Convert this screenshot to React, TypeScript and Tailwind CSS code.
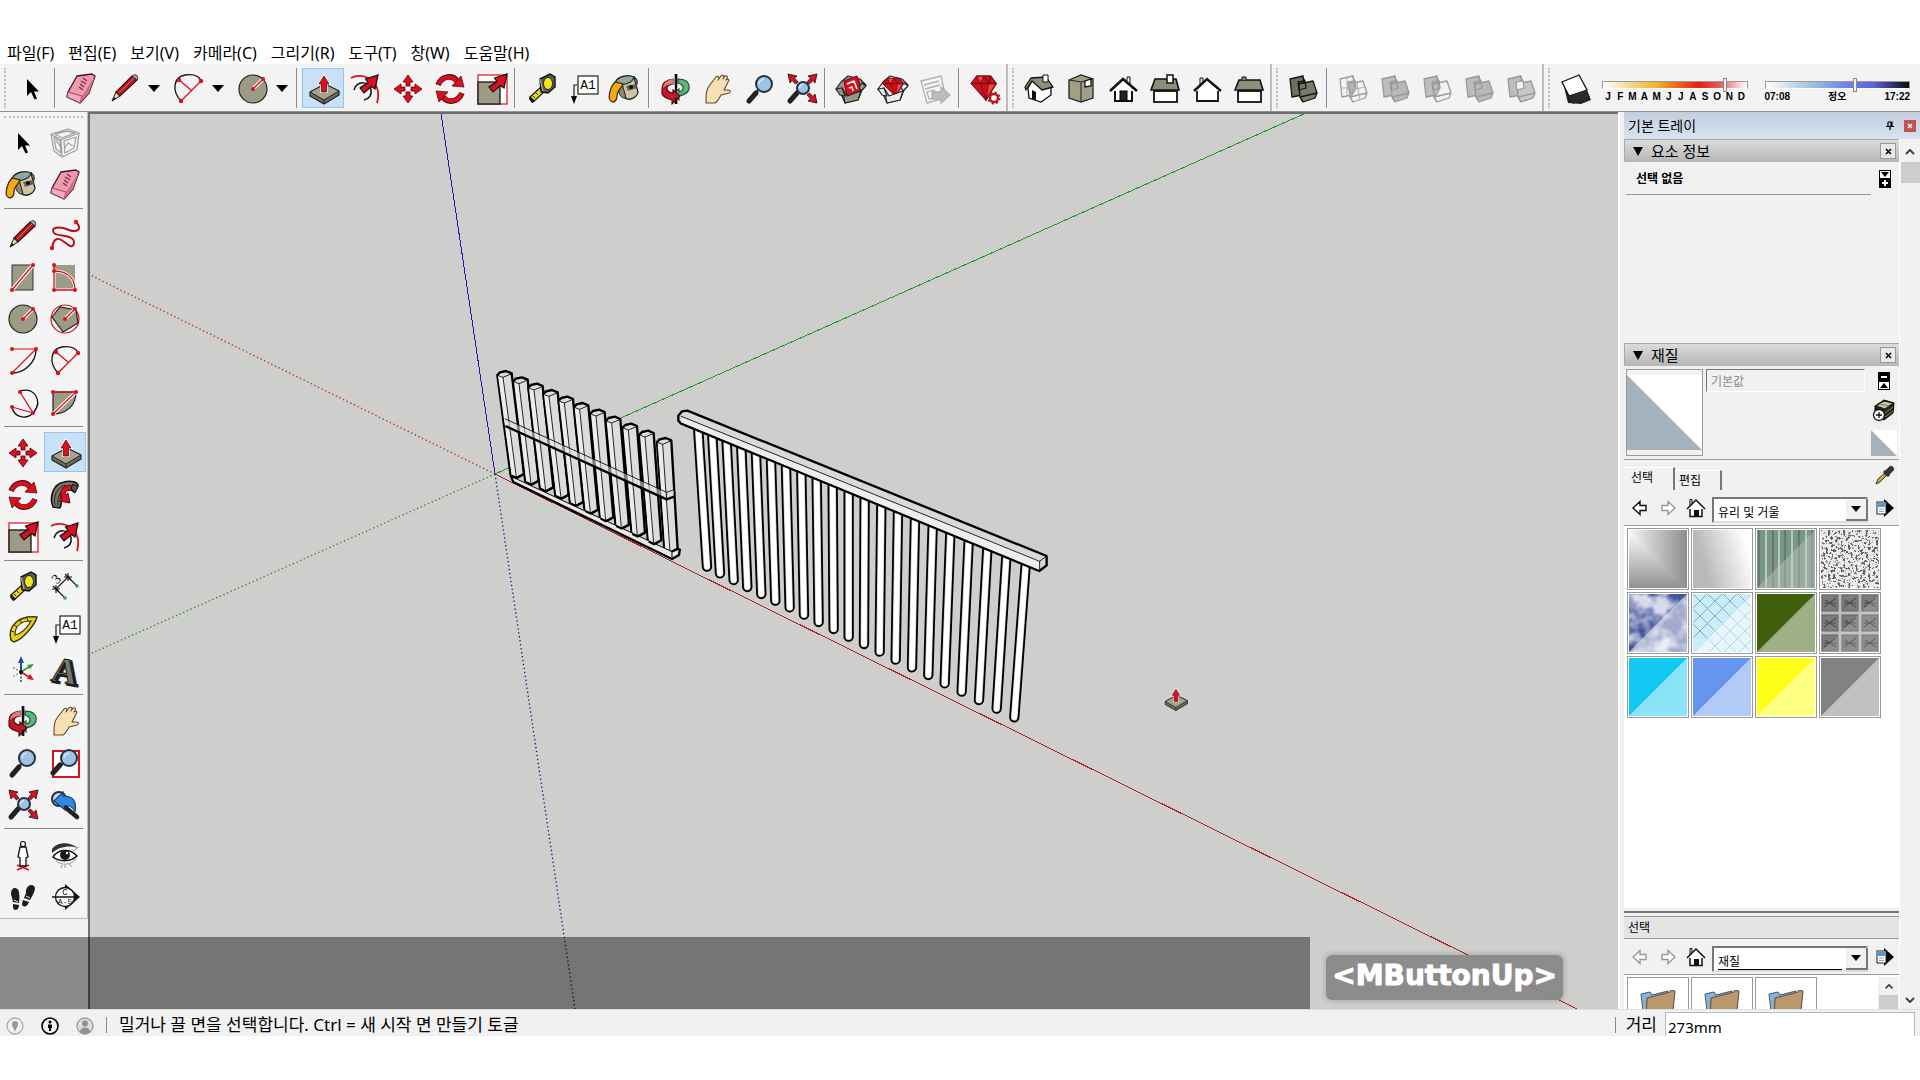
import React from 'react';
import clsx from 'clsx';

const RED = '#d9101f';
const STONE = '#9c9b86';

type IconName = keyof typeof icons;

const Dot = ({ x, y, r = 2 }: { x: number; y: number; r?: number }) => <circle cx={x} cy={y} r={r} fill={RED} />;

const Lens = ({ x = 19, y = 11, r = 8, hx = 3, hy = 29 }) => (
  <>
    <path d={`M${x - r * 0.7} ${y + r * 0.7} L${hx + 6} ${hy - 7}`} stroke="#333" strokeWidth="2" />
    <path d={`M${hx + 7} ${hy - 9} L${hx} ${hy - 1}`} stroke="#222" strokeWidth="5" strokeLinecap="round" />
    <circle cx={x} cy={y} r={r} fill="#9fc3e6" stroke="#26303c" strokeWidth="2" />
    <path d={`M${x - r * 0.6} ${y} A${r * 0.6} ${r * 0.6} 0 0 1 ${x} ${y - r * 0.6}`} stroke="#d8e9f8" strokeWidth="1.5" fill="none" />
  </>
);

const NeArrow = () => (
  <path d="M31 0 L28 14 L24.5 11.5 L17 18 L13 13 L21 7.5 L18.5 4 Z" fill={RED} stroke="#111" strokeWidth="1.2" />
);

const CornerArrow = ({ t }: { t: string }) => (
  <path transform={t} d="M1 1 L10 3 L7.5 5 L11 9 L8.5 11 L5 7.5 L3 10 Z" fill={RED} stroke="#111" strokeWidth="0.8" />
);

const Solids = ({ a, b, c }: { a: string; b: string; c: string }) => (
  <g strokeLinejoin="round" strokeWidth="1.3">
    <path d="M3 6 L16 3 L18 17 L15 22 L5 24 Z" fill={a} stroke={c} />
    <path d="M12 11 L26 8 L30 20 L28 25 L16 29 L13 24 Z" fill={b} stroke={c} />
    <path d="M13 24 L30 20 M16 29 L13 24 M15 3 L18 8" fill="none" stroke={c} />
    <path d="M11 9 L18 8 L19 15 L12 17 Z" fill="none" stroke={c} />
  </g>
);

const Gem = () => (
  <>
    <path d="M8 3 L23 3 L29 11 L18 29 L2 11 Z" fill="#c9131c" stroke="#5c0509" />
    <path d="M8 3 L12 11 L16 3 L21 11 L23 3 M2 11 H29 M12 11 L18 29 L21 11" fill="none" stroke="#6e060b" />
    <path d="M9 4 L15 4 L12 10 Z M21 12 L27 12 L19 24 Z" fill="#ef4a4d" />
  </>
);

const OpenBox = ({ fill, children }: { fill: string; children: React.ReactNode }) => (
  <g strokeLinejoin="round">
    <path d="M6 9 L13 3 L25 6 L31 12 L27 17 L23 27 L10 30 L6 21 L1 16 Z" fill={fill} stroke="#222" strokeWidth="1.2" />
    {children}
    <path d="M7 15 L12 23 L26 18 L23 27 L10 30 Z" fill={fill} stroke="#222" strokeWidth="1.2" />
    <path d="M7 15 L1 16 L5 22 L10 23 Z M26 18 L31 13 L27 10 L24 14 Z" fill={fill} stroke="#222" strokeWidth="1.2" />
  </g>
);

const icons = {
  select: <path d="M12 6 V23 L16 19 L19.5 26.5 L22 25.5 L19 18.5 H24 Z" fill="#000" />,
  component: (
    <g fill="none" stroke="#a0a0a0" strokeWidth="1.3" strokeLinejoin="round">
      <path d="M2 7 L19 2 L30 6 L28 23 L13 30 L5 24 Z M2 7 L12 13 L13 30 M12 13 L30 6" />
      <path d="M5 10 L11 14 L12 26 L7 22 Z M15 14 L27 10 L25 21 L16 26 Z" />
      <path d="M6 7 L18 4 L26 6 L13 11 Z M15 22 L19 16 L24 19 M7 13 L11 19" />
    </g>
  ),
  paint: (
    <>
      <path d="M17 5 C26 1 30 7 27 13" fill="none" stroke="#222" strokeWidth="1.3" />
      <path d="M10 8 L25 4 L29 19 C28 25 20 28 16 25 Z" fill="#cfc3a2" stroke="#222" strokeWidth="1.3" />
      <path d="M17 13 L27 11 L28 15 L19 18 Z" fill="#5f6358" />
      <path d="M6 10 C8 3 20 1 25 4 C24 10 12 14 6 10 Z" fill="#8fa7a5" stroke="#222" strokeWidth="1.3" />
      <path d="M13 10 L17 25 C11 26 9 19 9 13 Z" fill="#8c8a75" stroke="#222" />
      <path d="M6 9 C1 14 -1 24 1 27 C4 31 8 28 8 23 C8 17 13 15 14 11 Z" fill="#f3a81c" stroke="#3b2a05" strokeWidth="1.2" />
      <circle cx="22" cy="14" r="2" fill="#111" />
    </>
  ),
  eraser: (
    <>
      <path d="M12 3 L27 1 L30 3 L24 20 L15 30 L2 24 L3 19 Z" fill="#f39ab0" stroke="#3c1520" strokeWidth="1.3" strokeLinejoin="round" />
      <path d="M3 19 L17 23 L15 30 L2 24 Z" fill="#f7a9bc" stroke="#7c3a4a" strokeWidth="0.8" />
      <path d="M17 23 L30 3 L24 20 L15 30 Z" fill="#cf6f88" />
      <path d="M18 5 L22 8 M16 8 L21 11 M15 11 L19 14 M14 14 L18 17" stroke="#7a3044" strokeWidth="1.4" />
    </>
  ),
  pencil: (
    <>
      <path d="M4 28 L8 19 L12 23 Z" fill="#e8d3a1" stroke="#222" />
      <path d="M4 28 L6 24 L8 26 Z" fill="#111" />
      <path d="M8 19 L24 3 L29 7 L12 23 Z" fill="#b41a20" stroke="#3a0c0e" strokeWidth="1.2" />
      <path d="M11 20 L26 5" stroke="#e4686b" />
      <path d="M24 3 C28 0 31 3 29 7 Z" fill="#b7a4a4" stroke="#333" />
    </>
  ),
  freehand: (
    <>
      <path d="M27 3 C34 10 28 14 20 11 C10 7 1 8 5 14 C8 18 26 15 25 24 C23 34 14 18 8 20 C3 22 4 27 3 29" fill="none" stroke="#b3101c" strokeWidth="2" />
      <Dot x={27} y={3} r={2.2} />
      <Dot x={3} y={29} r={2.2} />
    </>
  ),
  rect: (
    <>
      <rect x="6" y="4" width="21" height="25" fill={STONE} stroke="#333" />
      <path d="M6 29 L27 4" stroke="#fff" strokeWidth="3.5" />
      <path d="M6 29 L27 4" stroke={RED} strokeWidth="1.3" />
      <Dot x={27} y={4} />
      <Dot x={6} y={29} />
    </>
  ),
  rotRect: (
    <>
      <path d="M5 4 H26 V29 H5 Z" fill={STONE} />
      <path d="M5 10 C18 10 26 17 26 29 H5 Z" fill={STONE} stroke="#fff" strokeWidth="3" />
      <path d="M5 4 V29 H26 C26 16 17 10 5 10" fill="none" stroke={RED} strokeWidth="1.3" />
      <Dot x={5} y={4} /><Dot x={5} y={10} /><Dot x={5} y={29} /><Dot x={26} y={29} />
    </>
  ),
  circle: (
    <>
      <circle cx="17" cy="16" r="14" fill={STONE} stroke="#222" strokeWidth="1.2" />
      <path d="M17 16 L27 6" stroke="#fff" strokeWidth="3.5" />
      <path d="M17 16 L27 6" stroke={RED} strokeWidth="1.5" />
      <Dot x={17} y={16} /><Dot x={27} y={6} />
    </>
  ),
  polygon: (
    <>
      <circle cx="16" cy="16" r="14" fill="none" stroke={RED} strokeWidth="1.2" />
      <path d="M3 14 L11 4 L27 7 L29 20 L14 29 Z" fill={STONE} stroke="#222" strokeWidth="1.2" />
      <path d="M16 16 L26 6" stroke="#fff" strokeWidth="3.5" />
      <path d="M16 16 L26 6" stroke={RED} strokeWidth="1.5" />
      <Dot x={16} y={16} /><Dot x={26} y={6} />
    </>
  ),
  arc: (
    <>
      <path d="M30 4 C30 18 18 28 6 28" fill="none" stroke="#111" strokeWidth="1.3" />
      <path d="M6 4 H30 L6 28" fill="none" stroke={RED} strokeWidth="1.2" />
      <Dot x={6} y={4} /><Dot x={30} y={4} /><Dot x={6} y={28} />
    </>
  ),
  arc2: (
    <>
      <path d="M9 28 C-1 17 2 4 13 2 C21 1 27 3 29 8" fill="none" stroke="#111" strokeWidth="1.3" />
      <path d="M9 28 L29 8 M7 7 L19 17" fill="none" stroke={RED} strokeWidth="1.3" />
      <Dot x={9} y={28} r={2.2} /><Dot x={29} y={8} r={2.2} /><Dot x={7} y={7} r={2.2} />
    </>
  ),
  arc3: (
    <>
      <path d="M14 4 C28 0 37 13 28 25 C20 34 8 30 6 20" fill="none" stroke="#111" strokeWidth="1.3" />
      <path d="M14 5 L27 26 L6 20" fill="none" stroke={RED} strokeWidth="1.3" />
      <Dot x={14} y={5} /><Dot x={27} y={26} /><Dot x={6} y={20} />
    </>
  ),
  pie: (
    <>
      <path d="M4 5 H27 C27 18 18 27 4 27 Z" fill={STONE} stroke="#222" strokeWidth="1.2" />
      <path d="M4 27 L27 5" stroke="#fff" strokeWidth="3.5" />
      <path d="M4 27 L27 5 H4" fill="none" stroke={RED} strokeWidth="1.3" />
      <Dot x={4} y={5} /><Dot x={27} y={5} /><Dot x={4} y={27} />
    </>
  ),
  move: (
    <g fill={RED} stroke="#6e0710" strokeWidth="0.9">
      {[0, 90, 180, 270].map((a) => (
        <path key={a} transform={`rotate(${a} 17 16)`} d="M17 2 L22 9 H19 V13 H15 V9 H12 Z" />
      ))}
    </g>
  ),
  pushpull: (
    <>
      <path d="M3 19 L18 11 L32 18 V22 L17 31 L3 23 Z" fill="#6d6c5c" stroke="#222" strokeWidth="1.2" strokeLinejoin="round" />
      <path d="M3 19 L18 11 L32 18 L17 27 Z" fill="#a4a38f" stroke="#222" strokeWidth="1" strokeLinejoin="round" />
      <path d="M17 27 V31" stroke="#222" />
      <path d="M17 3 L22 11 H19.500 V19 H14.500 V11 H12 Z" fill={RED} stroke="#fff" strokeWidth="2.2" />
      <path d="M17 3 L22 11 H19.500 V19 H14.500 V11 H12 Z" fill={RED} stroke="#5a0a10" strokeWidth="0.8" />
    </>
  ),
  rotate: (
    <>
      {[0, 180].map((a) => (
        <g key={a} transform={`rotate(${a} 17 16)`}>
          <path d="M5 12 C9 2 20 2 24 8" fill="none" stroke="#5a0a10" strokeWidth="5.600" />
          <path d="M5.500 11.500 C9 3 19 2 24 8.500" fill="none" stroke={RED} strokeWidth="4" />
          <path d="M28 3 L31 14 L19 13 Z" fill={RED} stroke="#5a0a10" strokeWidth="0.8" />
        </g>
      ))}
    </>
  ),
  followme: (
    <>
      <path d="M4 28 C0 18 4 5 15 3 C22 1 29 3 29 7 L25 13 C20 8 13 12 12 18 C12 22 13 25 11 29 Z" fill="#78776a" stroke="#111" strokeWidth="1.6" />
      <path d="M6 26 C4 17 8 8 17 6 M9 27 C8 19 10 12 18 9" fill="none" stroke="#222" />
      <path d="M22 6 C12 7 10 13 13 19 L10 22 L21 24 L19 14 L17 16 C15 13 18 11 23 11 Z" fill={RED} stroke="#5a0a10" />
      <path d="M24 5 L29 8 L26 14 L22 9 Z" fill="#55544a" stroke="#111" />
    </>
  ),
  scale: (
    <>
      <rect x="3" y="2" width="29" height="29" fill="#fff" stroke={RED} strokeWidth="1.2" />
      <rect x="3" y="9" width="22" height="22" fill={STONE} stroke="#222" strokeWidth="1.4" />
      <g transform="translate(1 1)"><NeArrow /></g>
    </>
  ),
  offset: (
    <>
      <path d="M2 5 C14 -2 34 8 28 30" fill="none" stroke={RED} strokeWidth="1.800" />
      <path d="M5 17 C8 7 21 8 22 17 C23 22 20 26 15 27" fill="none" stroke="#111" strokeWidth="1.500" />
      <g transform="translate(-2 2)"><NeArrow /></g>
    </>
  ),
  tape: (
    <>
      <path d="M5 24 L15 15 L19 19 L8 29 Z" fill="#e9d81c" stroke="#222" strokeWidth="1.3" />
      <path d="M8 23 L10 25 M11 20 L13 22" stroke="#222" />
      <path d="M5 23 L10 28 L7 30 L4 26 Z" fill="#111" />
      <path d="M15 6 L25 1 L30 4 V14 L23 20 L16 19 Z" fill="#5c5c52" stroke="#111" strokeWidth="1.4" />
      <ellipse cx="23" cy="10.500" rx="4.500" ry="6" fill="#f2e81e" stroke="#222" />
      <path d="M15 6 L18 18" stroke="#bbb" />
    </>
  ),
  dimension: (
    <>
      <path d="M7 18 L19 6 M7 18 L16 27 M19 6 L28 15" stroke="#222" strokeWidth="1.2" />
      <path d="M3 18 H11 M7 14 V22 M4 15 L10 21 M15 6 H23 M19 2 V10 M16 3 L22 9" stroke="#111" strokeWidth="1.1" />
      <circle cx="16" cy="27" r="1.800" fill="#3aa83f" />
      <circle cx="28" cy="15" r="1.800" fill="#3aa83f" />
      <text x="4" y="12" transform="rotate(-45 8 8)" fill="#111" fontSize="14" fontFamily="Liberation Serif">3</text>
    </>
  ),
  protractor: (
    <>
      <path d="M5 27 C1 13 13 2 31 4 C29 12 16 27 8 29 Z" fill="#e6cf28" stroke="#3a3208" strokeWidth="1.4" />
      <path d="M9 22 C9 13 15 8 25 8 C21 15 15 21 9 22 Z" fill="#f3f3f3" stroke="#3a3208" strokeWidth="1.2" />
      <path d="M5 18 L8 19 M8 12 L11 14 M14 7 L16 10 M21 5 L22 8" stroke="#3a3208" />
    </>
  ),
  text: (
    <>
      <path d="M13 12 H7 V24" fill="none" stroke="#222" strokeWidth="1.2" />
      <path d="M4 23 H10 L7 31 Z" fill="#000" />
      <rect x="11" y="3" width="20" height="18" fill="#fff" stroke="#222" strokeWidth="1.2" />
      <text x="21" y="16" textAnchor="middle" fill="#111" fontSize="13" fontFamily="Liberation Mono">A1</text>
    </>
  ),
  axes: (
    <>
      <path d="M15 17 V6" stroke="#1c4f9c" strokeWidth="2" />
      <path d="M15 1 L18 8 H12 Z" fill="#1c4f9c" />
      <path d="M15 18 V28" stroke="#1c4f9c" strokeWidth="1.500" strokeDasharray="2 1.500" />
      <path d="M15 17 L23 12" stroke="#2e9e38" strokeWidth="1.600" />
      <path d="M28 9 L24 14 L21 10 Z" fill="#2e9e38" />
      <path d="M15 17 L6 22" stroke="#2e9e38" strokeDasharray="2 1.500" />
      <path d="M15 17 L23 22" stroke={RED} strokeWidth="1.600" />
      <path d="M28 25 L21 24 L24 19 Z" fill={RED} />
      <path d="M15 17 L6 12" stroke={RED} strokeDasharray="2 1.500" />
      <circle cx="15" cy="17" r="2" fill="#111" />
    </>
  ),
  text3d: (
    <g fontFamily="Liberation Serif" fontWeight="bold" fontSize="36" transform="rotate(10 16 16)">
      <text x="5" y="29" fill="#222" stroke="#222" strokeWidth="2">A</text>
      <text x="3" y="28" fill="#77766a" stroke="#111" strokeWidth="0.900">A</text>
    </g>
  ),
  orbit: (
    <>
      <path d="M17 1 V31" stroke="#111" strokeWidth="2.400" />
      <path d="M19 6 C28 6 31 11 30 16 C29 20 25 22 20 23 V27 L14 21 L20 16 V19 C25 18 26 12 19 10 Z" fill="#5cb77d" stroke="#1e4a2c" strokeWidth="1.1" />
      <path d="M14 6 C5 7 3 12 3 16 L3 21 C5 25 9 26 13 27 V31 L21 23 L14 17 V20 C6 19 6 12 14 11 Z" fill="#c01a2a" stroke="#4a060d" strokeWidth="1.1" />
      <path d="M14 6 C7 7 4 11 4 15 C7 12 10 11 14 11 Z" fill="#e57b7b" />
      <path d="M17 1 V12 M17 25 V31" stroke="#111" strokeWidth="2.400" />
    </>
  ),
  pan: (
    <path
      d="M5 30 C5 22 5 17 8 13 L15 4 C17 2 19 4 17 7 L20 3 C22 1 24 3 22 6 L24 3 C27 2 27 5 25 7 C27 5 29 7 27 9 L23 17 L27 17 C30 17 30 19 28 20 L20 22 C18 26 16 29 14 30 Z"
      fill="#f8e0b4" stroke="#5b4a2c" strokeWidth="1.1" strokeLinejoin="round"
    />
  ),
  zoom: <Lens x={21} y={11} r={8} hx={6} />,
  zoomWindow: (
    <>
      <rect x="4" y="4" width="26" height="26" fill="#fff" stroke={RED} strokeWidth="2" />
      <Lens x={20} y={11} r={8} hx={4} hy={27} />
    </>
  ),
  extents: (
    <>
      <CornerArrow t="translate(2 0)" />
      <CornerArrow t="translate(33 0) scale(-1 1)" />
      <CornerArrow t="translate(33 31) scale(-1 -1)" />
      <Lens x={18} y={15} r={6} hx={5} />
    </>
  ),
  previous: (
    <>
      <circle cx="10" cy="10" r="7" fill="#c9dcee" stroke="#26303c" strokeWidth="2" />
      <path d="M16 18 L28 28" stroke="#222" strokeWidth="4.500" strokeLinecap="round" />
      <path d="M5 12 L14 3 V7 C24 7 28 12 26 23 C24 17 20 16 15 17 L16 21 Z" fill="#2c8be0" stroke="#113a66" strokeWidth="1.1" />
    </>
  ),
  position: (
    <>
      <path d="M11 26 L23 31 M23 26 L11 31" stroke={RED} strokeWidth="1.500" />
      <circle cx="17" cy="5" r="2.500" fill="#fff" stroke="#111" strokeWidth="1.2" />
      <path d="M14 8 H20 L22 18 L20 19 L20 27 H14 L14 19 L12 18 Z" fill="#fff" stroke="#111" strokeWidth="1.3" />
    </>
  ),
  look: (
    <>
      <path d="M3 10 C8 3 20 2 29 9 C22 6 10 7 3 14 Z" fill="#333" />
      <path d="M4 18 C9 10 21 9 28 17 C22 23 10 23 4 18 Z" fill="#fff" stroke="#111" strokeWidth="1.500" />
      <circle cx="16" cy="16" r="5" fill="#1a1a1a" />
      <circle cx="18" cy="14" r="1.200" fill="#fff" />
      <path d="M7 22 C13 27 22 26 27 20 M12 26 L13 29 M16 26 V29 M24 12 L30 8 M20 25 L23 28" fill="none" stroke="#999" />
    </>
  ),
  walk: (
    <>
      <path d="M5 13 C5 5 12 6 13 11 C14 16 13 19 13 22 L7 21 Z M7 23 L13 24 C13 30 8 30 7 27 Z" fill="#1c1c1c" />
      <path d="M20 12 C19 5 27 1 29 7 C29 11 26 15 24 19 L18 17 Z M17 19 L23 21 C21 27 16 26 16 23 Z" fill="#1c1c1c" />
      <path d="M8 19 L12 21 M20 15 L24 17" stroke="#eee" />
    </>
  ),
  section: (
    <>
      <path d="M16 3 L31 16 L16 29 Z" fill="#111" />
      <circle cx="16" cy="16" r="9.500" fill="#fff" stroke="#111" strokeWidth="1.3" />
      <path d="M3 16 H30" stroke="#111" strokeWidth="1.500" />
      <text x="16" y="14" textAnchor="middle" fill="#111" fontSize="9" fontFamily="Liberation Mono">C</text>
      <text x="16" y="23" textAnchor="middle" fill="#111" fontSize="8" fontFamily="Liberation Mono">A-5</text>
    </>
  ),
  warehouse: (
    <OpenBox fill="#9a9584">
      <path d="M9 8 L22 3 L27 17 L12 23 Z" fill={RED} stroke="#6e0710" />
      <path d="M12 11 L19 8 L22 16 M14 15 L17 14 L18 18" fill="none" stroke="#fff" strokeWidth="1.500" />
    </OpenBox>
  ),
  extWarehouse: (
    <OpenBox fill="#ececec">
      <g transform="translate(4 3) scale(.8 .7)"><Gem /></g>
    </OpenBox>
  ),
  layout: (
    <g stroke="#b0b0b0" strokeWidth="1.3">
      <path d="M2 8 L22 3 L27 25 L8 30 Z" fill="#f6f6f6" />
      <path d="M5 12 L20 8 M6 16 L21 12 M8 19 L15 17 L17 25 L10 26 Z" fill="none" />
      <path d="M13 19 H22 V14 L31 22 L22 30 V26 H13 Z" fill="#bdbdbd" />
    </g>
  ),
  extManager: (
    <>
      <g transform="scale(.95 .95)"><Gem /></g>
      <circle cx="25" cy="25" r="4" fill="#fff" stroke="#b91822" strokeWidth="2.400" />
      <circle cx="25" cy="25" r="5.500" fill="none" stroke="#b91822" strokeWidth="2" strokeDasharray="2.200 2.100" />
    </>
  ),
  viewIso: (
    <>
      <path d="M5 15 L9 8 L19 15 L28 13 V22 L18 29 L6 25 Z" fill="#fff" stroke="#111" strokeWidth="1.300" />
      <path d="M2 14 L8 5 L23 4 L30 14 L19 17 L9 8 L3 17 Z" fill="#8e8d7a" stroke="#111" strokeWidth="1.300" strokeLinejoin="round" />
      <path d="M20 9 V2 H25 V9 Z" fill="#fff" stroke="#111" />
      <path d="M9 17 L13 19 V27 L9 26 Z" fill="#111" />
    </>
  ),
  viewTop: (
    <>
      <path d="M4 7 L16 2 L28 6 V25 L16 29 L4 25 Z" fill="#a19f88" stroke="#222" strokeWidth="1.300" />
      <path d="M16 9 V29 M4 7 L16 9 L28 6" fill="none" stroke="#222" />
      <path d="M20 8 L26 6 V13 L20 14 Z" fill="#fff" stroke="#111" strokeWidth="1.300" />
    </>
  ),
  viewFront: (
    <>
      <path d="M8 15 V28 H25 V15" fill="#fff" stroke="#111" strokeWidth="2" />
      <path d="M3 18 L16 6 L30 18" fill="#fff" stroke="#111" strokeWidth="2.600" />
      <path d="M20 8 V4 H23 V11" fill="none" stroke="#111" />
      <rect x="13" y="18" width="7" height="10" fill="#222" stroke="#000" />
    </>
  ),
  viewRight: (
    <>
      <rect x="5" y="18" width="23" height="11" fill="#fff" stroke="#111" strokeWidth="1.800" />
      <path d="M6 6 H27 L30 17 H2 Z" fill="#8e8d7a" stroke="#111" strokeWidth="1.600" />
      <rect x="18" y="2" width="6" height="8" fill="#fff" stroke="#111" strokeWidth="1.500" />
    </>
  ),
  viewBack: (
    <>
      <path d="M6 15 V28 H27 V15" fill="#fff" stroke="#111" strokeWidth="1.800" />
      <path d="M3 18 L16 6 L30 18" fill="#fff" stroke="#111" strokeWidth="2.400" />
      <path d="M9 12 V5 H12 V9" fill="none" stroke="#111" />
    </>
  ),
  viewLeft: (
    <>
      <rect x="5" y="18" width="23" height="11" fill="#fff" stroke="#111" strokeWidth="1.800" />
      <path d="M6 7 H27 L30 17 H2 Z" fill="#8e8d7a" stroke="#111" strokeWidth="1.600" />
      <path d="M9 7 V4 H13 V7" fill="#8e8d7a" stroke="#111" />
    </>
  ),
  outerShell: <Solids a="#6f6e60" b="#7d7c6c" c="#151512" />,
  intersect: (
    <>
      <Solids a="none" b="none" c="#9c9c9c" />
      <path d="M11 10 L17 9 L18 17 L14 21 Z" fill="#b5b5b5" stroke="#9c9c9c" />
      <path d="M5 15 H16 M10 4 V23 M20 10 L23 27 M14 17 L28 14" stroke="#b0b0b0" />
    </>
  ),
  union: <Solids a="#bdbdbd" b="#b9b9b9" c="#989898" />,
  subtract: <Solids a="#bdbdbd" b="none" c="#989898" />,
  trim: <Solids a="#bdbdbd" b="#b9b9b9" c="#989898" />,
  split: (
    <>
      <Solids a="#bdbdbd" b="#c6c6c6" c="#989898" />
      <path d="M11 9 L18 8 L19 15 L12 17 Z" fill="#f3f3f3" stroke="#989898" />
    </>
  ),
  shadows: (
    <>
      <path d="M4 9 L9 20 L28 18 L32 27 L22 31 L9 30 L7 22 Z" fill="#222" />
      <path d="M3 9 L20 2 L28 17 L10 23 Z" fill="#fff" stroke="#111" strokeWidth="1.300" />
      <path d="M10 23 L28 17 L31 24 L14 31 Z" fill="#2a2a2a" />
    </>
  ),
};

const Icon = ({ name, size = 32 }: { name: IconName; size?: number }) => (
  <svg width={size} height={size} viewBox="0 0 32 32" fill="none" className="overflow-visible shrink-0" aria-hidden>
    {icons[name]}
  </svg>
);

const ToolButton = ({ name, active, wide }: { name: IconName; active?: boolean; wide?: boolean }) => (
  <button
    aria-label={name}
    className={clsx(
      'h-10 pt-0.5 flex items-center justify-center border shrink-0',
      wide ? 'w-11' : 'w-[42px]',
      active ? 'bg-[#c9e1f6] border-[#93c4ec]' : 'border-transparent'
    )}
  >
    <Icon name={name} />
  </button>
);

const Caret = () => (
  <button aria-label="more" className="w-5 h-10 pr-1 flex items-center justify-center shrink-0">
    <svg width="12" height="7" viewBox="0 0 12 7"><path d="M0 0 H12 L6 7 Z" /></svg>
  </button>
);

const Sep = () => <div className="w-2 h-10 pl-0.5 shrink-0"><div className="w-px h-full bg-[#8a8a8a]" /></div>;

const Grip = () => <div className="w-2.5 h-10 pl-1 shrink-0"><div className="h-full border-l-2 border-dotted border-[#bdbdbd]" /></div>;

const Group = ({ children }: { children: React.ReactNode }) => (
  <div className="flex pt-1 border-r-2 border-[#bcbcbc] shrink-0">
    <Grip />
    {children}
  </div>
);

const menus = ['파일(F)', '편집(E)', '보기(V)', '카메라(C)', '그리기(R)', '도구(T)', '창(W)', '도움말(H)'];

const MenuBar = () => (
  <nav className="h-6 flex items-center gap-3.5 pl-[7px] pt-0.5 text-[16px] leading-6 whitespace-nowrap">
    {menus.map((m) => (
      <button key={m}>{m}</button>
    ))}
  </nav>
);

const thumb =
  'appearance-none block w-full h-2 border border-[#999] border-b-white [&::-webkit-slider-thumb]:appearance-none [&::-webkit-slider-thumb]:w-1 [&::-webkit-slider-thumb]:h-[14px] [&::-webkit-slider-thumb]:bg-[#f4f4f4] [&::-webkit-slider-thumb]:border [&::-webkit-slider-thumb]:border-[#888]';

const ShadowSliders = () => (
  <div className="flex gap-[17px] pl-1.5 pt-[17px] flex-1 pr-2.5 text-[10px] leading-3 font-bold [font-family:'Liberation_Sans','Noto_Sans_CJK_KR',sans-serif]">
    <div className="flex-1">
      <input type="range" aria-label="date" defaultValue={86} className={clsx(thumb, 'bg-[linear-gradient(90deg,#fff,#f3dc8c_18%,#efb92a_36%,#e8210f_66%,#e8505a_80%,#fff)]')} />
      <div className="flex pt-0.5">
        {'JFMAMJJASOND'.split('').map((m, i) => (
          <span key={i} className="flex-1 text-center">{m}</span>
        ))}
      </div>
    </div>
    <div className="flex-1">
      <input type="range" aria-label="time" defaultValue={63} className={clsx(thumb, 'bg-[linear-gradient(90deg,#fff,#a4c4dc_30%,#6f86ee_55%,#5b63e0_75%,#0a0a14)]')} />
      <div className="flex justify-between pt-0.5">
        <span>07:08</span>
        <span>정오</span>
        <span>17:22</span>
      </div>
    </div>
  </div>
);

const views: IconName[] = ['viewIso', 'viewTop', 'viewFront', 'viewRight', 'viewBack', 'viewLeft'];
const solids: IconName[] = ['intersect', 'union', 'subtract', 'trim', 'split'];

const TopToolbar = () => (
  <div className="h-12 flex bg-[#f3f3f3] border-b border-[#8f938f]">
    <Group>
      <ToolButton name="select" />
      <Sep />
      <ToolButton name="eraser" />
      <ToolButton name="pencil" wide />
      <Caret />
      <ToolButton name="arc2" wide />
      <Caret />
      <ToolButton name="circle" wide />
      <Caret />
      <Sep />
      <ToolButton name="pushpull" active />
      <ToolButton name="offset" />
      <ToolButton name="move" />
      <ToolButton name="rotate" />
      <ToolButton name="scale" />
      <Sep />
      <ToolButton name="tape" />
      <ToolButton name="text" />
      <ToolButton name="paint" />
      <Sep />
      <ToolButton name="orbit" />
      <ToolButton name="pan" />
      <ToolButton name="zoom" />
      <ToolButton name="extents" />
      <Sep />
      <ToolButton name="warehouse" />
      <ToolButton name="extWarehouse" />
      <ToolButton name="layout" />
      <Sep />
      <ToolButton name="extManager" />
    </Group>
    <Group>{views.map((v) => <ToolButton key={v} name={v} />)}</Group>
    <Group>
      <ToolButton name="outerShell" />
      <Sep />
      {solids.map((v) => <ToolButton key={v} name={v} />)}
    </Group>
    <div className="flex flex-1 min-w-0">
      <div className="flex pt-1">
        <Grip />
        <ToolButton name="shadows" />
      </div>
      <ShadowSliders />
    </div>
  </div>
);

const sideGroups: IconName[][] = [
  ['select', 'component', 'paint', 'eraser'],
  ['pencil', 'freehand', 'rect', 'rotRect', 'circle', 'polygon', 'arc', 'arc2', 'arc3', 'pie'],
  ['move', 'pushpull', 'rotate', 'followme', 'scale', 'offset'],
  ['tape', 'dimension', 'protractor', 'text', 'axes', 'text3d'],
  ['orbit', 'pan', 'zoom', 'zoomWindow', 'extents', 'previous'],
  ['position', 'look', 'walk', 'section'],
];

const SideToolbar = () => (
  <div className="w-[88px] shrink-0 bg-[#f1f1f1]">
    <div className="bg-[#f4f4f4] border-b border-r border-[#bbb] pt-1">
      <div className="mx-1 mb-1 border-t-2 border-dotted border-[#bdbdbd]" />
      {sideGroups.map((group, i) => (
        <div key={i}>
          {i > 0 && <div className="h-2 mx-1 pt-0.5"><div className="h-px bg-[#8a8a8a]" /></div>}
          <div className="grid grid-cols-[43px_42px] gap-y-0.5 pb-0.5 pl-px">
            {group.map((n) => (
              <ToolButton key={n} name={n} active={n === 'pushpull'} />
            ))}
          </div>
        </div>
      ))}
    </div>
  </div>
);

// slats of the picket fence: top-left corner and bottom-left corner, in third-pixels
const pickets = [
  [82, 75, 122, 376], [130, 94, 166, 396], [175, 113, 210, 416], [220, 132, 256, 438], [266, 152, 300, 460], [312, 171, 344, 483],
  [361, 191, 390, 506], [408, 212, 437, 528], [458, 233, 485, 552], [508, 254, 534, 575], [561, 276, 583, 600],
];

// balusters: top x, bottom x, bottom y
const posts = [
  [115, 141, 530], [157, 180, 550], [200, 221, 570], [244, 262, 591], [288, 304, 612], [333, 346, 632], [378, 389, 652],
  [424, 432, 674], [470, 476, 696], [518, 521, 717], [566, 566, 740], [614, 612, 762], [664, 659, 785], [714, 707, 809],
  [765, 756, 832], [818, 805, 855], [871, 854, 880], [926, 905, 905], [982, 957, 930], [1039, 1010, 956], [1097, 1063, 982],
];

const Scene = () => (
  <svg viewBox="90 114 1528 896" preserveAspectRatio="xMinYMin slice" className="absolute inset-0 w-full h-full" aria-hidden>
    <g fill="none" strokeWidth="1">
      <path d="M495 474 L441 113" stroke="#1a1ab0" shapeRendering="crispEdges" />
      <path d="M495 474 L1306 113" stroke="#1f9c1f" shapeRendering="crispEdges" />
      <path d="M495 474 L1577 1009" stroke="#b01c24" shapeRendering="crispEdges" />
      <path d="M495 474 L575 1009" stroke="#10107a" strokeWidth="1.300" strokeDasharray="1.300 2.700" />
      <path d="M495 474 L90 275" stroke="#b81c24" strokeWidth="1.300" strokeDasharray="1.300 2.700" />
      <path d="M495 474 L90 654" stroke="#1c7c2c" strokeWidth="1.300" strokeDasharray="1.300 2.700" />
    </g>
    <g transform="translate(470 350) scale(.3333)" strokeLinejoin="round" stroke="#000">
      {pickets.map(([x, y, bx, by]) => (
        <g key={x}>
          <path d={`M${x} ${y} L${x + 8} ${y - 8} L${x + 26} ${y - 12} L${x + 43} ${y - 5} L${bx + 40} ${by - 4} L${bx + 18} ${by + 8} L${bx} ${by} Z`} fill="#dcdcdc" strokeWidth="7" />
          <path d={`M${x + 2} ${y + 2} L${x + 17} ${y + 7} L${bx + 18} ${by + 5} L${bx + 3} ${by} Z`} fill="#ececec" stroke="none" />
          <path d={`M${x + 3} ${y + 2} L${x + 17} ${y + 7} L${x + 41} ${y - 3} M${x + 17} ${y + 7} L${bx + 17} ${by + 5}`} fill="none" strokeWidth="2.500" />
        </g>
      ))}
      <path d="M104 208 L590 428 L612 418 V440 L590 449 L106 228 Z" fill="#e2e2e2" fillOpacity=".55" strokeWidth="0" />
      <path d="M104 206 L590 427 L612 419 M590 427 V448" fill="none" strokeWidth="2.500" />
      <path d="M106 228 L590 448 L612 440" fill="none" strokeWidth="7" />
      <path d="M125 378 L606 605 L630 596 L628 614 L606 628 L130 396 Z" fill="#e8e8ea" strokeWidth="0" />
      <path d="M125 380 L606 605 V626" fill="none" strokeWidth="3" />
      <path d="M606 605 L628 596" fill="none" strokeWidth="6" />
      {pickets.slice(0, 10).map(([, , bx, by]) => (
        <path key={bx} d={`M${bx + 2} ${by} L${bx + 18} ${by + 8} L${bx + 40} ${by - 4}`} fill="none" strokeWidth="6" />
      ))}
      <path d="M122 376 L130 396 L606 627 L627 615 L630 596" fill="none" strokeWidth="7" />
    </g>
    <g transform="translate(660 390) scale(.3333)" strokeLinejoin="round" strokeLinecap="round">
      {posts.map(([tx, bx, by]) => {
        const ty = 100 + (tx - 60) * 0.411;
        return (
          <g key={tx}>
            <path d={`M${tx} ${ty} L${bx} ${by}`} stroke="#000" strokeWidth="31" />
            <path d={`M${tx} ${ty} L${bx} ${by}`} stroke="#c9c9c9" strokeWidth="20" />
            <path d={`M${tx} ${ty} L${bx} ${by}`} stroke="#fff" strokeWidth="16" />
          </g>
        );
      })}
      <path d="M55 77 L66 64 L82 62 L1160 498 V526 L1138 543 L62 100 L55 92 Z" fill="#d9d9d9" stroke="#000" strokeWidth="7" />
      <path d="M62 80 L1139 514 V539 L64 97 Z" fill="#ededed" />
      <path d="M64 79 L1139 514 L1158 500 M1139 514 V540" fill="none" stroke="#000" strokeWidth="2.500" />
    </g>
    <g transform="translate(1163 687) scale(.76)">{icons.pushpull}</g>
  </svg>
);

const SectionHeader = ({ title }: { title: string }) => (
  <div className="h-[23px] shrink-0 flex items-center justify-between pl-2 pr-[3px] border-t border-l border-[#a8a8a8] bg-linear-to-b from-[#dcdcdc] to-[#b6b6b6]">
    <button className="flex items-center gap-2 text-[15px] leading-5">
      <svg width="10" height="9" viewBox="0 0 10 9"><path d="M0 0 H10 L5 9 Z" /></svg>
      {title}
    </button>
    <button aria-label="닫기" className="w-4 h-4 bg-[#e9e9e9] border border-[#999] flex items-center justify-center">
      <svg width="7" height="7" viewBox="0 0 7 7"><path d="M1 1 L6 6 M6 1 L1 6" stroke="#000" strokeWidth="1.500" /></svg>
    </button>
  </div>
);

const Expander = ({ up }: { up?: boolean }) => (
  <button aria-label="자세히" className={clsx('w-3 h-[18px]', up && 'rotate-180')}>
    <svg width="12" height="18" viewBox="0 0 12 18">
      <rect width="12" height="18" fill="#000" />
      <rect x="1" y="1" width="10" height="7" fill="#fff" />
      <path d="M2 2 H10 L6 7 Z" />
      <path d={up ? 'M3 13 H9' : 'M3 13 H9 M6 10 V16'} stroke="#fff" strokeWidth="2" />
    </svg>
  </button>
);

const HalfSwatch = () => (
  <svg viewBox="0 0 74 74" preserveAspectRatio="none" className="block w-full h-full" aria-hidden>
    <rect width="74" height="74" fill="#fff" />
    <path d="M0 0 L74 74 H0 Z" fill="#a6b2bb" />
  </svg>
);

const NavArrow = ({ dim, flip }: { dim?: boolean; flip?: boolean }) => (
  <button aria-label={flip ? '앞으로' : '뒤로'} className={clsx('w-4 h-4', flip && 'rotate-180')}>
    <svg width="16" height="16" viewBox="0 0 16 16">
      <path d="M1 8 L8 1.500 V5.500 H14 V10.500 H8 V14.500 Z" fill="#fff" stroke={dim ? '#999' : '#111'} strokeWidth="1.400" />
    </svg>
  </button>
);

const NavRow = ({ label, value, dim, underline }: { label: string; value: string; dim?: boolean; underline?: boolean }) => (
  <div className="h-9 shrink-0 flex items-center pl-2 pr-[5px] border-b border-[#999]">
    <NavArrow dim={dim} />
    <div className="w-3" />
    <NavArrow dim flip />
    <button aria-label="홈" className="ml-2.5 w-5 h-5">
      <svg width="20" height="20" viewBox="0 0 20 20">
        <path d="M4 10 V18.500 H16 V10" fill="#fff" stroke="#111" strokeWidth="1.500" />
        <path d="M1 11 L10 2 L19 11" fill="#fff" stroke="#111" strokeWidth="1.500" />
        <path d="M4 8 V1.500 H6 V6" fill="none" stroke="#111" />
        <rect x="8" y="12" width="5" height="7" fill="#111" />
      </svg>
    </button>
    <div className="relative ml-1.5 mt-1 flex-1 h-[26px] border-2 border-[#777] border-r-[#ddd] border-b-[#ddd] bg-white">
      <select aria-label={label} className="appearance-none w-full h-full pl-1 text-xs leading-5 bg-transparent">
        <option>{value}</option>
      </select>
      {underline && <div className="absolute left-1 right-6 bottom-0 h-px bg-black" />}
      <div className="absolute -right-0.5 top-0 bottom-0 w-[22px] bg-[#f1f1f1] border-r-2 border-b-2 border-[#777] flex items-center justify-center pointer-events-none">
        <svg width="10" height="6" viewBox="0 0 10 6"><path d="M0 0 H10 L5 6 Z" /></svg>
      </div>
    </div>
    <button aria-label="세부 정보" className="ml-2 w-[18px] h-[18px]">
      <svg width="18" height="18" viewBox="0 0 18 18">
        <path d="M8 0 L18 9 L8 18 Z" fill="#000" />
        <rect x="1" y="3" width="9" height="12" fill="#fff" stroke="#222" />
        <path d="M2 4 H9 V8 H2 Z" fill="#5b93d0" />
        <path d="M3 10 H8 M3 12.500 H8" stroke="#8aa" />
      </svg>
    </button>
  </div>
);

const Half = () => <path d="M58 0 V58 H0 Z" fill="#fff" fillOpacity=".5" />;

const lattice = Array.from({ length: 9 }, (_, i) => i * 15 - 30);

const materials: React.ReactNode[] = [
  <><rect width="58" height="58" fill="url(#mirrorA)" /><path d="M0 0 L58 58 H0 Z" fill="url(#mirrorB)" /></>,
  <rect width="58" height="58" fill="url(#mirrorC)" />,
  <>
    <rect width="58" height="58" fill="#7d9488" />
    {[2, 9, 16, 22, 28, 35, 42, 49, 55].map((x, i) => <path key={x} d={`M${x} 0 V58`} stroke={i % 2 ? '#a7d3bd' : '#66786f'} strokeWidth="2" />)}
    <path d="M58 0 V58 H0 Z" fill="#c8cdc8" fillOpacity=".4" />
  </>,
  <><rect width="58" height="58" fill="#ececec" /><rect width="58" height="58" filter="url(#speckle)" /></>,
  <><rect width="58" height="58" fill="#44569a" /><rect width="58" height="58" filter="url(#clouds)" /><Half /></>,
  <>
    <rect width="58" height="58" fill="#c9eefb" />
    {lattice.map((o) => <path key={o} d={`M${o} 0 L${o + 58} 58 M${o + 14} 0 L${o - 44} 58`} stroke="#7f9fac" strokeWidth=".900" />)}
    <Half />
  </>,
  <><rect width="58" height="58" fill="#3f5f0a" /><Half /></>,
  <>
    <rect width="58" height="58" fill="#b9bcb8" />
    {[1, 21, 41].map((y) => [1, 21, 41].map((x) => (
      <g key={`${x}-${y}`}>
        <rect x={x} y={y} width="16" height="16" fill="#7f7b7a" stroke="#626462" />
        <path d={`M${x + 2} ${y + 12} L${x + 14} ${y + 3} M${x + 3} ${y + 5} L${x + 14} ${y + 12} M${x + 2} ${y + 8} H${x + 14}`} stroke="#524d4e" strokeWidth="1.200" />
      </g>
    )))}
    <path d="M58 0 V58 H0 Z" fill="#fff" fillOpacity=".15" />
  </>,
  <><rect width="58" height="58" fill="#14c8f4" /><Half /></>,
  <><rect width="58" height="58" fill="#6595ee" /><Half /></>,
  <><rect width="58" height="58" fill="#ffff1a" /><path d="M58 0 V58 H0 Z" fill="#ffff80" /></>,
  <><rect width="58" height="58" fill="#828282" /><Half /></>,
];

const Chevron = ({ down }: { down?: boolean }) => (
  <svg width="10" height="6" viewBox="0 0 10 6" className={clsx(down && 'rotate-180')}>
    <path d="M1 5 L5 1 L9 5" fill="none" stroke="#444" strokeWidth="2" />
  </svg>
);

const Folder = () => (
  <button aria-label="폴더" className="w-[62px] h-[62px] shrink-0 bg-white border border-[#999] flex items-start justify-center pt-3">
    <svg width="36" height="30" viewBox="0 0 36 30">
      <path d="M1 4 L10 2 L12 5 L28 1 V30 H4 Z" fill="#86b3d6" stroke="#44586a" />
      <path d="M7 8 L30 2 L31 0 L35 1 L32 30 H6 Z" fill="#b9986e" stroke="#5c4c36" />
    </svg>
  </button>
);

const Tray = () => (
  <aside className="w-[302px] shrink-0 flex flex-col bg-[#f1f1f1] border-l-2 border-white pl-1">
    <div className="h-[27px] shrink-0 flex items-center px-1 bg-linear-to-b from-[#c2cedd] to-[#d8e3f1] text-[14px] leading-5">
      <h2 className="flex-1">기본 트레이</h2>
      <button aria-label="고정" className="mr-2.5 w-2">
        <svg width="8" height="9" viewBox="0 0 8 9"><path d="M2 1 H6 V5 M2 1 V5 M0 5.500 H8 M4 6 V9 M5 1 V5" stroke="#000" strokeWidth="1.200" fill="none" /></svg>
      </button>
      <button aria-label="트레이 닫기" className="w-3 h-3 bg-[#c4504f] flex items-center justify-center">
        <svg width="6" height="6" viewBox="0 0 6 6"><path d="M1 1 L5 5 M5 1 L1 5" stroke="#fff" strokeWidth="1.300" /></svg>
      </button>
    </div>
    <div className="flex flex-1 min-h-0">
      <div className="flex-1 min-w-0 flex flex-col border-r border-white">
        <SectionHeader title="요소 정보" />
        <div className="h-[181px] shrink-0 flex items-start pl-0.5 pr-2">
          <p className="flex-1 h-[33px] pl-2.5 border-b border-[#999] text-xs font-bold leading-[34px]">선택 없음</p>
          <div className="pl-2 pt-2"><Expander /></div>
        </div>
        <SectionHeader title="재질" />
        <div className="h-[94px] shrink-0 flex border-b border-[#999] pl-0.5 pt-[3px]">
          <div className="w-[77px] h-[87px] border border-[#999] pt-[5px] pb-[5px]"><HalfSwatch /></div>
          <input
            aria-label="재질 이름"
            defaultValue="기본값"
            disabled
            className="ml-[3px] flex-1 min-w-0 h-[23px] px-1 text-xs border border-[#777] border-r-white border-b-white text-[#888] bg-[#f1f1f1]"
          />
          <div className="w-[34px] flex flex-col items-center gap-2 pt-[3px] pl-1">
            <Expander up />
            <button aria-label="재질 만들기" className="w-6 h-6">
              <svg width="24" height="24" viewBox="0 0 24 24">
                <path d="M3 8 L12 2 L22 5 L21 15 L12 22 L3 17 Z" fill="#25251f" stroke="#000" />
                <path d="M4 8 L12 3 L21 5 L13 11 Z" fill="#c9c2a0" stroke="#111" />
                <path d="M8 6 L17 8 M13 15 L21 9 M13 19 L21 13" stroke="#8c8667" />
                <circle cx="7" cy="17" r="5.500" fill="#fff" stroke="#111" strokeWidth="1.300" />
                <path d="M4 17 H10 M7 14 V20" stroke="#111" strokeWidth="1.300" />
              </svg>
            </button>
            <div className="w-[26px] h-[26px] shrink-0"><HalfSwatch /></div>
          </div>
        </div>
        <div className="h-[30px] shrink-0 flex items-end text-xs" role="tablist">
          <button role="tab" aria-selected className="w-[51px] h-[23px] pl-[7px] text-left leading-5 border-t border-white border-r-2 border-r-[#777] pb-0.5">선택</button>
          <button role="tab" className="w-[47px] h-5 pl-1 text-left leading-5 border-t border-white border-r-2 border-r-[#777]">편집</button>
          <button aria-label="샘플링" className="ml-auto mr-1 mb-1 w-[21px] h-[21px]">
            <svg width="21" height="21" viewBox="0 0 21 21">
              <path d="M2 19 L4 14 L11 8 L13 10 L6 17 Z" fill="#dca63a" stroke="#333" />
              <path d="M10 6 L15 11" stroke="#222" strokeWidth="3" />
              <path d="M13 8 L17 4" stroke="#333" strokeWidth="6" strokeLinecap="round" />
            </svg>
          </button>
        </div>
        <NavRow label="재질 모음" value="유리 및 거울" />
        <div className="flex-1 min-h-0 bg-white pl-[3px] pt-0.5">
          <div className="grid grid-cols-[repeat(4,62px)] gap-0.5">
            {materials.map((m, i) => (
              <button key={i} aria-label={`재질 ${i + 1}`} className="w-[62px] h-[62px] border border-[#999] p-px">
                <svg viewBox="0 0 58 58" className="block w-full h-full overflow-hidden">
                  {i === 0 && (
                    <defs>
                      <linearGradient id="mirrorA"><stop stopColor="#f4f4f4" /><stop offset="1" stopColor="#8e8e8e" /></linearGradient>
                      <linearGradient id="mirrorB" x2="0" y2="1"><stop stopColor="#fff" /><stop offset="1" stopColor="#919191" /></linearGradient>
                      <linearGradient id="mirrorC" x2="1" y2="-.3"><stop stopColor="#b9b9b9" /><stop offset=".8" stopColor="#fff" /></linearGradient>
                      <filter id="speckle" x="0" y="0" width="1" height="1" colorInterpolationFilters="sRGB">
                        <feTurbulence type="fractalNoise" baseFrequency=".4" numOctaves="2" seed="4" />
                        <feColorMatrix values="0 0 0 0 .38 0 0 0 0 .38 0 0 0 0 .38 12 0 0 0 -6.4" />
                      </filter>
                      <filter id="clouds" x="0" y="0" width="1" height="1" colorInterpolationFilters="sRGB">
                        <feTurbulence type="fractalNoise" baseFrequency=".05" numOctaves="3" seed="8" />
                        <feColorMatrix values="0 0 0 0 .85 0 0 0 0 .86 0 0 0 0 .93 3 0 0 0 -1.1" />
                      </filter>
                    </defs>
                  )}
                  {m}
                </svg>
              </button>
            ))}
          </div>
        </div>
        <div className="h-[9px] shrink-0 pt-[3px] border-b border-[#999]"><div className="h-0.5 bg-[#777]" /></div>
        <p className="h-[22px] shrink-0 pl-1 text-xs leading-[21px] bg-[#e4e4e4] border-b border-[#999]">선택</p>
        <NavRow label="두 번째 재질 모음" value="재질" dim underline />
        <div className="h-[34px] shrink-0 flex bg-white pl-[3px] pt-0.5 overflow-hidden">
          <div className="flex gap-0.5 flex-1">
            <Folder />
            <Folder />
            <Folder />
          </div>
          <div className="w-[21px] bg-[#f1f1f1] flex flex-col items-center pt-[7px] gap-[6px]">
            <Chevron />
            <div className="w-[19px] h-4 bg-[#cdcdcd]" />
          </div>
        </div>
      </div>
      <div className="w-5 flex flex-col items-center pt-2.5 pb-1.5">
        <Chevron />
        <div className="mt-[7px] w-[19px] h-[21px] bg-[#cdcdcd]" />
        <div className="flex-1" />
        <Chevron down />
      </div>
    </div>
  </aside>
);

const StatusBar = () => (
  <footer className="h-[27px] shrink-0 flex items-center bg-[#f1f1f1] border-t border-[#ddd] text-[17px] leading-6 overflow-hidden">
    <div className="flex items-center gap-[17px] pl-1.5 pt-1.5">
      <svg width="18" height="18" viewBox="0 0 18 18"><circle cx="9" cy="9" r="8" fill="none" stroke="#aaa" strokeWidth="1.300" /><path d="M9 15 C8 11 6 10 6 7 A3 3 0 0 1 12 7 C12 10 10 11 9 15 Z" fill="#999" /></svg>
      <svg width="18" height="18" viewBox="0 0 18 18"><circle cx="9" cy="9" r="8" fill="none" stroke="#000" strokeWidth="1.600" /><circle cx="9" cy="5" r="1.500" /><path d="M7 7.500 H11 V11 H10 V14 H8 V11 H7 Z" /></svg>
      <svg width="18" height="18" viewBox="0 0 18 18"><circle cx="9" cy="9" r="8" fill="#ddd" stroke="#999" strokeWidth="1.300" /><circle cx="9" cy="6.500" r="3" fill="#8f8f8f" /><path d="M4 15 C4 9 14 9 14 15 L9 17 Z" fill="#8f8f8f" /></svg>
    </div>
    <div className="ml-3 mr-3 mt-1 h-4 w-px bg-[#888]" />
    <p className="flex-1 pt-1">밀거나 끌 면을 선택합니다. Ctrl = 새 시작 면 만들기 토글</p>
    <div className="mr-2.5 mt-1 h-4 w-px bg-[#888]" />
    <label htmlFor="measure" className="pt-1">거리</label>
    <input id="measure" defaultValue="273mm" className="self-start ml-2 mr-[5px] mt-0.5 h-[30px] w-[250px] border border-[#a9bccd] bg-white px-0.5 text-[15px]" />
  </footer>
);

export default function App() {
  return (
    <div className="h-screen flex flex-col bg-white pt-10 pb-11 text-black overflow-hidden [font-family:'Noto_Sans','Noto_Sans_CJK_KR',sans-serif]">
      <MenuBar />
      <TopToolbar />
      <main className="relative flex-1 min-h-0 flex">
        <SideToolbar />
        <div className="relative flex-1 min-w-0 bg-[#cececd] border-l-2 border-t-2 border-[#6d6d6d] overflow-hidden">
          <Scene />
        </div>
        <Tray />
        <div className="absolute left-0 bottom-0 h-[72px] w-[68.25%] bg-black/43" />
        <div className="absolute right-[357px] bottom-[9px] h-[45px] px-1.5 rounded-md bg-[#888]/95 shadow-[0_0_4px_2px_#0002] text-white font-bold text-[28px] leading-[42px] [-webkit-text-stroke:1px_white] [font-family:'DejaVu_Sans',sans-serif]">
          &lt;MButtonUp&gt;
        </div>
      </main>
      <StatusBar />
    </div>
  );
}
